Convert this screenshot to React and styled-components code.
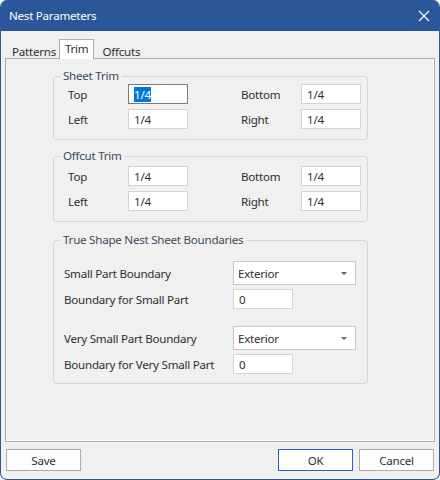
import React from "react";
import styled, { createGlobalStyle } from "styled-components";

const GlobalStyle = createGlobalStyle`
  html, body {
    margin: 0;
    padding: 0;
    background: #ffffff;
  }
  * {
    box-sizing: border-box;
  }
`;

const StyledWindow = styled.div`
  width: 440px;
  height: 480px;
  display: flex;
  flex-direction: column;
  border: 1px solid #2b579a;
  border-top: none;
  border-radius: 7px 7px 7px 7px;
  overflow: hidden;
  background: #f0f0f0;
  font-family: "Noto Sans", "Open Sans", sans-serif;
  font-size: 11.6px;
  letter-spacing: -0.25px;
  color: #2f2f2f;
`;

const StyledTitleBar = styled.div`
  height: 31px;
  flex: none;
  display: flex;
  align-items: center;
  justify-content: space-between;
  padding: 0 8px 0 9px;
  background: #2b579a;
  color: #ffffff;
  margin: 0 -1px;
  .close {
    width: 14px;
    height: 14px;
    margin-right: 1px;
  }
`;

const StyledBody = styled.div`
  flex: 1;
  display: flex;
  flex-direction: column;
  padding: 8px 4px 0 4px;
`;

const StyledTabs = styled.div`
  display: flex;
  align-items: flex-end;
  height: 20px;
  padding-left: 1px;
  position: relative;
  z-index: 1;
`;

const StyledTab = styled.div`
  height: ${({ $active }) => ($active ? "20px" : "17px")};
  padding: ${({ $pad }) => $pad};
  display: flex;
  align-items: center;
  background: ${({ $active }) => ($active ? "#ffffff" : "transparent")};
  border: 1px solid ${({ $active }) => ($active ? "#adadad" : "transparent")};
  border-bottom: none;
  margin-right: ${({ $active }) => ($active ? "1px" : "0")};
`;

const StyledPanel = styled.div`
  height: 384px;
  margin-top: -1px;
  border: 1px solid #adadad;
  box-shadow: inset -1px -1px 0 #ffffff;
  padding: 17px 0 0 47px;
  display: flex;
  flex-direction: column;
  gap: 16px;
`;

const StyledGroup = styled.div`
  position: relative;
  width: 315px;
  border: 1px solid #d6d6d6;
  border-radius: 3px;
  padding: ${({ $pad }) => $pad};
  margin-top: ${({ $mt }) => $mt || "0"};
  .caption {
    position: absolute;
    top: -9px;
    left: 6px;
    padding: 0 3px;
    line-height: 16px;
    background: #f0f0f0;
    color: #3c4b5c;
  }
`;

const StyledTrimGrid = styled.div`
  display: grid;
  grid-template-columns: 60px 60px 53px 60px 60px;
  grid-auto-rows: 20px;
  row-gap: 5px;
  padding-left: 14px;
  align-items: center;
`;

const StyledLabel = styled.span`
  white-space: nowrap;
  grid-column: ${({ $col }) => $col || "auto"};
`;

const StyledTextBox = styled.div`
  height: 20px;
  width: 60px;
  display: flex;
  align-items: center;
  padding-left: 5px;
  background: #ffffff;
  border: 1px solid ${({ $focused }) => ($focused ? "#7a7a7a" : "#d4d4d4")};
  .selected {
    background: #0078d7;
    color: #ffffff;
    line-height: 15px;
  }
`;

const StyledBoundaryGrid = styled.div`
  display: grid;
  grid-template-columns: 169px 123px;
  align-items: center;
  padding-left: 10px;
`;

const StyledBoundaryRow = styled.div`
  display: contents;
  > * {
    margin-bottom: ${({ $gap }) => $gap};
  }
`;

const StyledSelect = styled.div`
  height: 24px;
  width: 123px;
  display: flex;
  align-items: center;
  justify-content: space-between;
  padding: 0 8px 0 4px;
  background: #ffffff;
  border: 1px solid #c8c8c8;
  .arrow {
    width: 0;
    height: 0;
    border-left: 3px solid transparent;
    border-right: 3px solid transparent;
    border-top: 3px solid #606060;
  }
`;

const StyledFooter = styled.div`
  display: flex;
  align-items: center;
  padding: 7px 1px 0 1px;
  gap: 6px;
  .spacer {
    flex: 1;
  }
`;

const StyledButton = styled.button`
  width: 75px;
  height: 22px;
  font-family: inherit;
  font-size: inherit;
  letter-spacing: inherit;
  color: inherit;
  background: #fdfdfd;
  border: 1px solid ${({ $default }) => ($default ? "#2a62b7" : "#adadad")};
  padding: 0;
`;

const TrimGroup = ({ title, pad, focusFirst }) => (
  <StyledGroup $pad={pad}>
    <span className="caption">{title}</span>
    <StyledTrimGrid>
      <StyledLabel>Top</StyledLabel>
      <StyledTextBox $focused={focusFirst}>
        {focusFirst ? <span className="selected">1/4</span> : "1/4"}
      </StyledTextBox>
      <StyledLabel $col="4">Bottom</StyledLabel>
      <StyledTextBox>1/4</StyledTextBox>
      <StyledLabel>Left</StyledLabel>
      <StyledTextBox>1/4</StyledTextBox>
      <StyledLabel $col="4">Right</StyledLabel>
      <StyledTextBox>1/4</StyledTextBox>
    </StyledTrimGrid>
  </StyledGroup>
);

const App = () => {
  return (
    <>
      <GlobalStyle />
      <StyledWindow>
        <StyledTitleBar>
          <span>Nest Parameters</span>
          <svg className="close" viewBox="0 0 14 14">
            <path d="M2 2 L12 12 M12 2 L2 12" stroke="#ffffff" strokeWidth="1.1" fill="none" />
          </svg>
        </StyledTitleBar>
        <StyledBody>
          <StyledTabs>
            <StyledTab $pad="0 2px 0 5px">Patterns</StyledTab>
            <StyledTab $active $pad="0 5px 2px 5px">Trim</StyledTab>
            <StyledTab $pad="0 6px 0 6px">Offcuts</StyledTab>
          </StyledTabs>
          <StyledPanel>
            <TrimGroup title="Sheet Trim" pad="7px 0 10px 0" focusFirst />
            <TrimGroup title="Offcut Trim" pad="9px 0 10px 0" />
            <StyledGroup $pad="20px 0 9px 0" $mt="2px">
              <span className="caption">True Shape Nest Sheet Boundaries</span>
              <StyledBoundaryGrid>
                <StyledBoundaryRow $gap="4px">
                  <StyledLabel>Small Part Boundary</StyledLabel>
                  <StyledSelect>
                    Exterior
                    <span className="arrow" />
                  </StyledSelect>
                </StyledBoundaryRow>
                <StyledBoundaryRow $gap="17px">
                  <StyledLabel>Boundary for Small Part</StyledLabel>
                  <StyledTextBox>0</StyledTextBox>
                </StyledBoundaryRow>
                <StyledBoundaryRow $gap="4px">
                  <StyledLabel>Very Small Part Boundary</StyledLabel>
                  <StyledSelect>
                    Exterior
                    <span className="arrow" />
                  </StyledSelect>
                </StyledBoundaryRow>
                <StyledBoundaryRow $gap="0">
                  <StyledLabel>Boundary for Very Small Part</StyledLabel>
                  <StyledTextBox>0</StyledTextBox>
                </StyledBoundaryRow>
              </StyledBoundaryGrid>
            </StyledGroup>
          </StyledPanel>
          <StyledFooter>
            <StyledButton>Save</StyledButton>
            <span className="spacer" />
            <StyledButton $default>OK</StyledButton>
            <StyledButton>Cancel</StyledButton>
          </StyledFooter>
        </StyledBody>
      </StyledWindow>
    </>
  );
};

export default App;
